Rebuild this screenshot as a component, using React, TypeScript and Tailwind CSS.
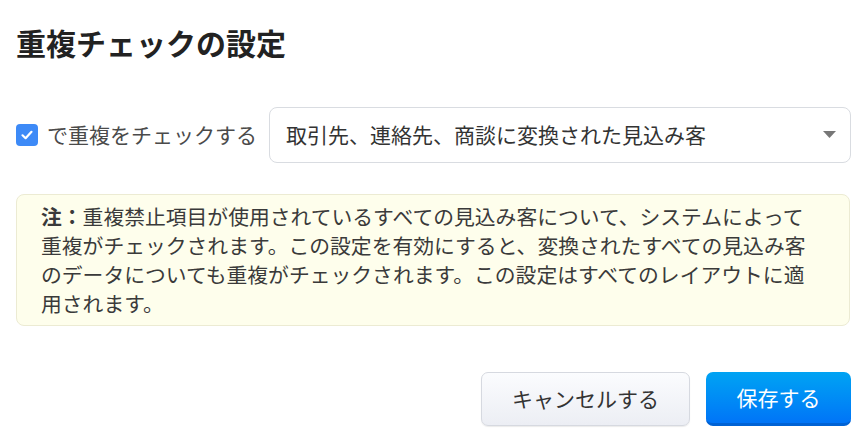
import React from "react";

export default function App() {
  const font = { fontFamily: '"Noto Sans CJK JP", "Noto Sans", sans-serif' };
  return (
    <div style={font} className="w-[864px] h-[444px] bg-white pl-[16px] pr-[13px] pt-[21px] overflow-hidden">
      <h1 className="text-[30px] leading-[42px] font-bold text-[#222]">重複チェックの設定</h1>
      <div className="mt-[44px] flex items-center h-[56px]">
        <div className="w-[22px] h-[22px] rounded-[4px] bg-[#3d8af7] flex items-center justify-center shrink-0">
          <svg width="14" height="14" viewBox="0 0 14 14" fill="none">
            <path d="M2.5 7.3 L5.6 10.2 L11.5 3.8" stroke="white" strokeWidth="2.2" strokeLinecap="round" strokeLinejoin="round" />
          </svg>
        </div>
        <span className="ml-[9px] text-[21px] text-[#4a4a4a] whitespace-nowrap">で重複をチェックする</span>
        <div className="ml-[12px] flex-1 h-[56px] border border-[#d9dce1] rounded-[8px] flex items-center pl-[16px] pr-[14px]">
          <span className="flex-1 text-[21px] text-[#333] whitespace-nowrap">取引先、連絡先、商談に変換された見込み客</span>
          <svg width="13" height="8" viewBox="0 0 13 8">
            <path d="M0 0 H13 L6.5 7 Z" fill="#777" />
          </svg>
        </div>
      </div>
      <div className="mt-[31px] mr-[1px] h-[132px] bg-[#fefeec] border border-[#ecebd3] rounded-[8px] pl-[24px] pr-[20px] py-[7px] text-[20.8px] leading-[29px] text-[#3a3a3a] whitespace-nowrap">
        <div><span className="font-bold">注：</span>重複禁止項目が使用されているすべての見込み客について、システムによって</div>
        <div>重複がチェックされます。この設定を有効にすると、変換されたすべての見込み客</div>
        <div>のデータについても重複がチェックされます。この設定はすべてのレイアウトに適</div>
        <div>用されます。</div>
      </div>
      <div className="mt-[46px] flex justify-end gap-[16px]">
        <button className="w-[209px] h-[54px] rounded-[7px] border border-[#d6d9e0] bg-gradient-to-b from-[#fbfcfe] to-[#eceef4] text-[21px] text-[#333] shadow-[0_1px_1px_rgba(0,0,0,0.08)]">
          キャンセルする
        </button>
        <button className="w-[145px] h-[54px] rounded-[7px] bg-gradient-to-b from-[#00a3f3] to-[#0074f7] border-b-[3px] border-[#0062d4] text-[21px] text-white">
          保存する
        </button>
      </div>
    </div>
  );
}
